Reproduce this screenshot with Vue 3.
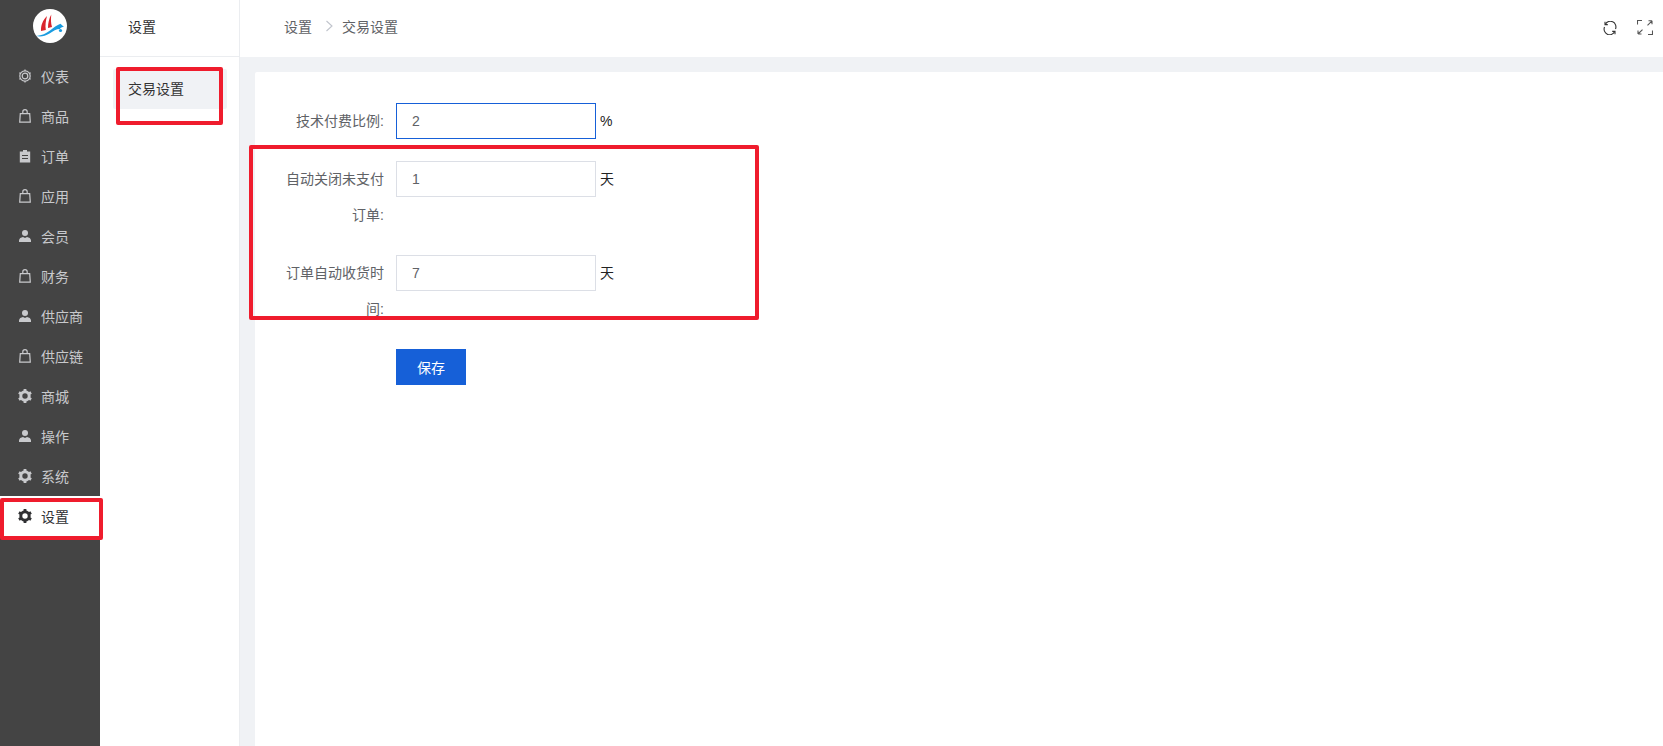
<script setup>
const navItems = [
  { label: '仪表', icon: 'dash' },
  { label: '商品', icon: 'bag' },
  { label: '订单', icon: 'clip' },
  { label: '应用', icon: 'bag' },
  { label: '会员', icon: 'user' },
  { label: '财务', icon: 'bag' },
  { label: '供应商', icon: 'user' },
  { label: '供应链', icon: 'bag' },
  { label: '商城', icon: 'gear' },
  { label: '操作', icon: 'user' },
  { label: '系统', icon: 'gear' },
  { label: '设置', icon: 'gear', active: true },
]
const fields = [
  { label: '技术付费比例:', value: '2', unit: '%', focus: true },
  { label: '自动关闭未支付订单:', value: '1', unit: '天' },
  { label: '订单自动收货时间:', value: '7', unit: '天' },
]
</script>

<template>
  <div class="page">
    <aside class="side">
      <div class="logo">
        <svg width="34" height="34" viewBox="0 0 34 34">
          <circle cx="17" cy="17" r="17" fill="#fff" />
          <path d="M8 22C7.800 16.500 9.500 11.500 14 7C12.800 11.500 12 16.500 12.800 21Z" fill="#d9252c" />
          <path d="M15 19C15 14 16 9.500 18.300 5.500C17.800 10 17.800 14 19 18Z" fill="#d9252c" />
          <path d="M3.300 27C9 26.500 13 24.500 17 21.500C20.500 19 24 16 27.500 14.800C28.500 16 29.500 17 31 17.500C29 18 27.500 18.500 27 20C23 20 20.500 22 16.500 24.500C12 27 8 28 3.300 27Z" fill="#1a9ce0" />
          <circle cx="27.500" cy="21.500" r="1.600" fill="#1a9ce0" />
        </svg>
      </div>
      <nav class="nav">
        <div v-for="item in navItems" :key="item.label" class="nav-item" :class="{ active: item.active }">
          <svg class="nav-icon" width="14" height="14" viewBox="0 0 14 14">
            <g v-if="item.icon === 'dash'" fill="none" stroke="currentColor">
              <circle cx="7" cy="7" r="5.200" stroke-width="1.200" />
              <circle cx="7" cy="7" r="2.800" stroke-width="1.200" />
              <path stroke-width="1.300" d="M7 .4V2M7 12V13.600M1.300 3.700 2.700 4.500M11.300 9.500 12.700 10.300M1.300 10.300 2.700 9.500M11.300 4.500 12.700 3.700" />
            </g>
            <g v-else-if="item.icon === 'bag'" fill="none" stroke="currentColor" stroke-width="1.200">
              <path d="M2.300 4.600H11.700L12.300 13.200H1.700Z" />
              <path d="M4.800 4.600V2.800A2.200 2.200 0 0 1 9.200 2.800V4.600" />
            </g>
            <g v-else-if="item.icon === 'clip'">
              <path fill="currentColor" fill-rule="evenodd" d="M1.800 2.500H5V1H9V2.500H12.200V13.500H1.800ZM4 6V7H10V6ZM4 9V10H10V9Z" />
            </g>
            <g v-else-if="item.icon === 'user'" fill="currentColor">
              <circle cx="7" cy="4" r="3" />
              <path d="M1 13V11.500C1 9.500 3 8.300 5 8L7 9 9 8C11 8.300 13 9.500 13 11.500V13Z" />
            </g>
            <g v-else fill="none" stroke="currentColor">
              <circle cx="7" cy="7" r="4.200" stroke-width="3" />
              <path stroke-width="2.800" d="M7 0V2.500M7 11.500V14M.9 3.500 3.100 4.750M10.900 9.250 13.100 10.500M.9 10.500 3.100 9.250M10.900 4.750 13.100 3.500" />
            </g>
          </svg>
          <span>{{ item.label }}</span>
        </div>
      </nav>
    </aside>

    <section class="sub">
      <div class="sub-head">设置</div>
      <div class="sub-item">交易设置</div>
    </section>

    <main class="main">
      <header class="top">
        <div class="crumbs">
          <span>设置</span>
          <svg class="crumb-sep" width="9" height="12" viewBox="0 0 9 12">
            <path d="M1.500 1 7 6 1.500 11" fill="none" stroke="#c0c4cc" stroke-width="1.100" />
          </svg>
          <span>交易设置</span>
        </div>
        <div class="tools">
          <svg width="14" height="14" viewBox="0 0 14 14" fill="none" stroke="#333" stroke-width="1.100">
            <path d="M2.400 3.200A5.600 5.600 0 0 1 12.500 8" />
            <path d="M11.600 10.800A5.600 5.600 0 0 1 1.500 6" />
            <path d="M2 .8V3.600H4.800" />
            <path d="M12 13.200V10.400H9.200" />
          </svg>
          <svg width="16" height="15" viewBox="0 0 16 15" fill="none" stroke="#555" stroke-width="1.100">
            <path d="M.5 4.500V.5H5" />
            <path d="M15 .8 10.500 5.300M15 .8H11.500M15 .8V4.300" />
            <path d="M1 14 5.500 9.700M1 14H4.500M1 14V10.500" />
            <path d="M11 14.500H15.500V10.500" />
          </svg>
        </div>
      </header>
      <div class="content">
        <form class="card">
          <div v-for="f in fields" :key="f.label" class="row">
            <label class="lbl">{{ f.label }}</label>
            <input class="inp" :class="{ focus: f.focus }" :value="f.value" readonly />
            <span class="unit">{{ f.unit }}</span>
          </div>
          <div class="row">
            <span class="lbl"></span>
            <button class="save" type="button">保存</button>
          </div>
        </form>
      </div>
    </main>

    <div class="mark mark-nav"></div>
    <div class="mark mark-sub"></div>
    <div class="mark mark-form"></div>
  </div>
</template>

<style>
html, body { margin: 0; background: #fff; }
</style>

<style scoped>
.page {
  position: relative;
  display: flex;
  height: 746px;
  overflow: hidden;
  font-family: "Liberation Sans", "Noto Sans CJK SC", sans-serif;
  font-size: 14px;
  color: #333;
}
.side {
  width: 100px;
  flex: none;
  background: #444;
}
.logo {
  height: 56px;
  box-sizing: border-box;
  padding-top: 9px;
  display: flex;
  justify-content: center;
}
.nav-item {
  height: 40px;
  display: flex;
  align-items: center;
  padding-left: 18px;
  gap: 9px;
  color: #c8c9cc;
}
.nav-item.active {
  background: #fff;
  color: #303133;
}
.nav-icon { flex: none; }
.sub {
  width: 140px;
  flex: none;
  box-sizing: border-box;
  border-right: 1px solid #ebedf0;
}
.sub-head {
  height: 57px;
  box-sizing: border-box;
  border-bottom: 1px solid #ebedf0;
  margin-right: -1px;
  padding-left: 28px;
  line-height: 55px;
}
.sub-item {
  margin: 12px 12px 0 13px;
  height: 40px;
  line-height: 40px;
  padding-left: 15px;
  background: #f0f2f5;
  border-radius: 2px;
}
.main {
  flex: 1;
  min-width: 0;
  display: flex;
  flex-direction: column;
}
.top {
  height: 57px;
  flex: none;
  display: flex;
  align-items: center;
  justify-content: space-between;
  padding: 0 10px 2px 44px;
  box-sizing: border-box;
  color: #606266;
}
.crumbs {
  display: flex;
  align-items: center;
  margin-top: -3px;
}
.crumb-sep { margin: 0 8px 0 13px; }
.tools {
  display: flex;
  align-items: center;
  gap: 20px;
}
.content {
  flex: 1;
  background: #f0f2f5;
  padding: 15px 0 0 15px;
}
.card {
  height: 100%;
  box-sizing: border-box;
  background: #fff;
  padding: 31px 20px;
  border-radius: 2px 0 0 0;
}
.row {
  display: flex;
  align-items: flex-start;
  margin-bottom: 22px;
}
.lbl {
  width: 121px;
  flex: none;
  box-sizing: border-box;
  padding-right: 12px;
  text-align: right;
  line-height: 36px;
  color: #606266;
}
.inp {
  width: 200px;
  height: 36px;
  box-sizing: border-box;
  border: 1px solid #dcdfe6;
  padding: 0 15px;
  font: inherit;
  color: #606266;
  outline: none;
  background: #fff;
  border-radius: 0;
}
.inp.focus { border-color: #1660d8; }
.unit {
  margin-left: 4px;
  line-height: 36px;
  color: #222;
}
.save {
  width: 70px;
  height: 36px;
  border: 0;
  padding: 0;
  background: #1660d8;
  color: #fff;
  font: inherit;
}
.mark {
  position: absolute;
  box-sizing: border-box;
  border: 4.500px solid #ef1c2d;
  border-radius: 2px;
  pointer-events: none;
}
.mark-nav { left: 0; top: 498px; width: 103px; height: 42px; }
.mark-sub { left: 116px; top: 67px; width: 107px; height: 58px; }
.mark-form { left: 249px; top: 145px; width: 510px; height: 175px; }
</style>
